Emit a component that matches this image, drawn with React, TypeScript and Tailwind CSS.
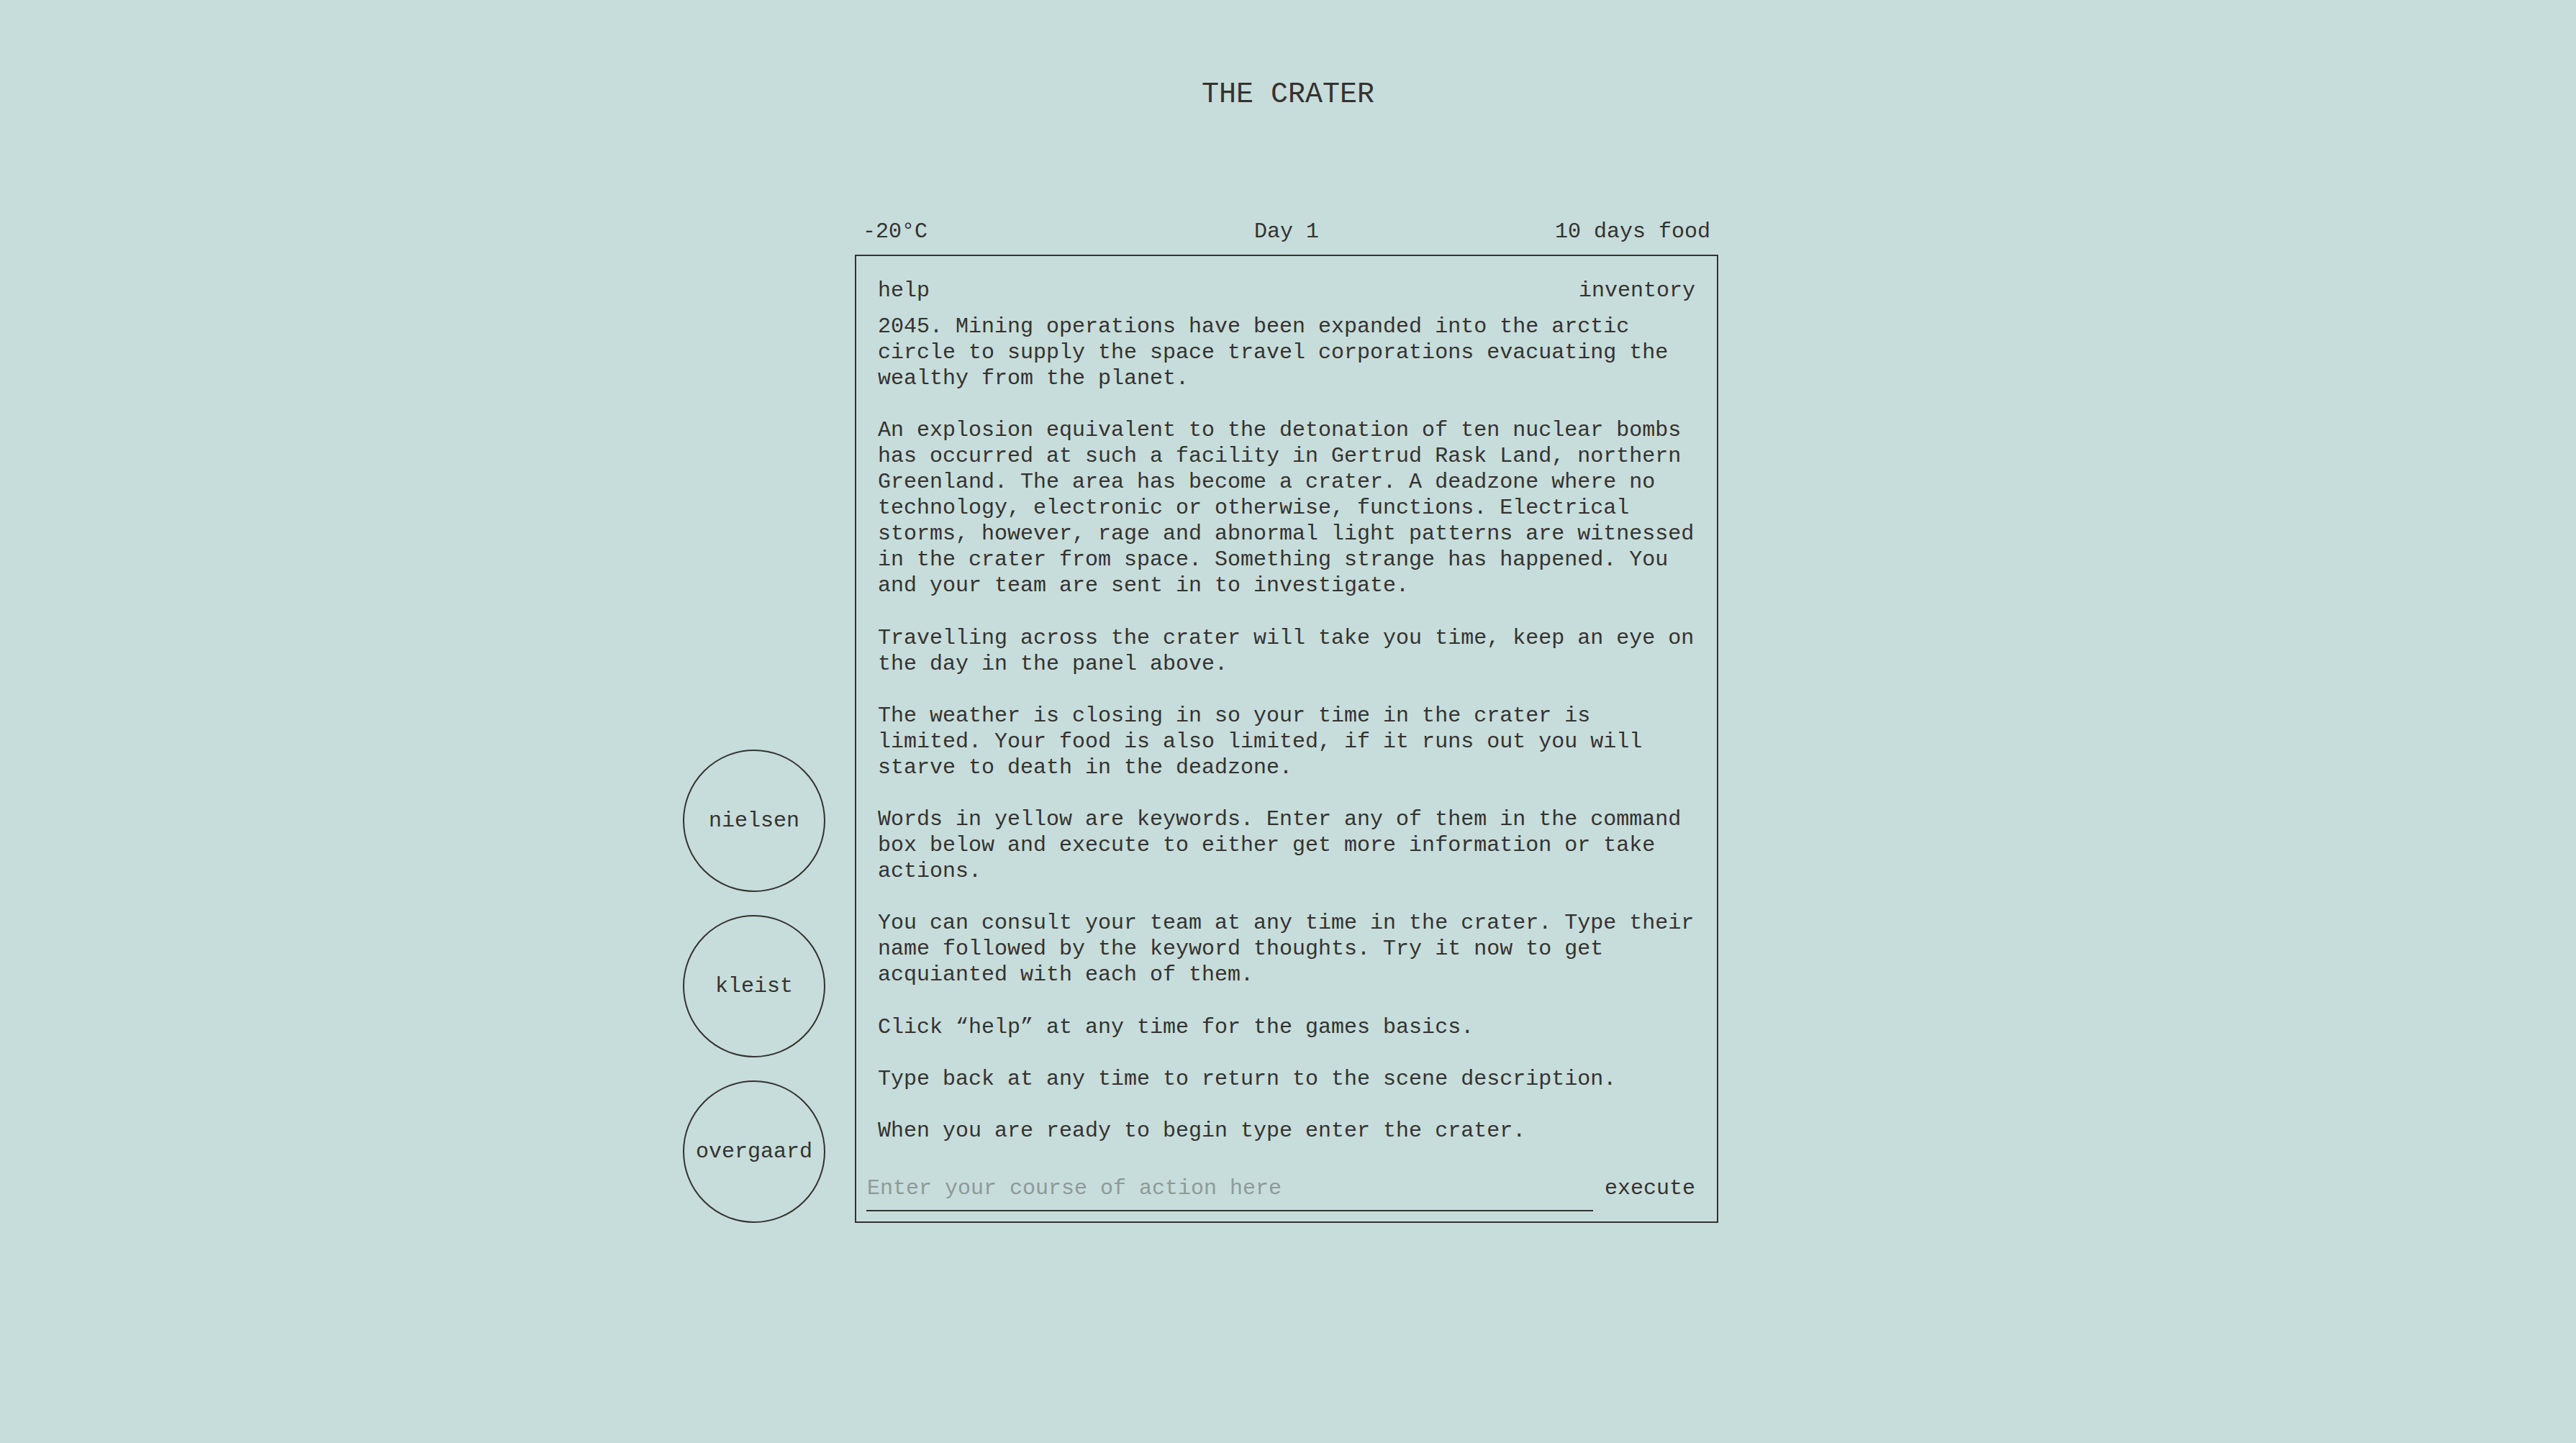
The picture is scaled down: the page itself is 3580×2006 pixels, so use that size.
const paragraphs = [
  "2045. Mining operations have been expanded into the arctic circle to supply the space travel corporations evacuating the wealthy from the planet.",
  "An explosion equivalent to the detonation of ten nuclear bombs has occurred at such a facility in Gertrud Rask Land, northern Greenland. The area has become a crater. A deadzone where no technology, electronic or otherwise, functions. Electrical storms, however, rage and abnormal light patterns are witnessed in the crater from space. Something strange has happened. You and your team are sent in to investigate.",
  "Travelling across the crater will take you time, keep an eye on the day in the panel above.",
  "The weather is closing in so your time in the crater is limited. Your food is also limited, if it runs out you will starve to death in the deadzone.",
  "Words in yellow are keywords. Enter any of them in the command box below and execute to either get more information or take actions.",
  "You can consult your team at any time in the crater. Type their name followed by the keyword thoughts. Try it now to get acquianted with each of them.",
  "Click \u201chelp\u201d at any time for the games basics.",
  "Type back at any time to return to the scene description.",
  "When you are ready to begin type enter the crater.",
];

const team = ["nielsen", "kleist", "overgaard"];

function TeamMember({ name }: { name: string }) {
  return (
    <div className="w-[198px] h-[198px] rounded-full border-2 border-[#36322f] flex items-center justify-center">
      <span className="text-[30px] leading-[36px]">{name}</span>
    </div>
  );
}

export default function App() {
  return (
    <div
      className="min-h-screen w-full bg-[#c6dddb] text-[#36322f] pt-[108px]"
      style={{ fontFamily: '"Liberation Mono", "Courier New", monospace' }}
    >
      <h1 className="text-center text-[40px] leading-[48px]">THE CRATER</h1>

      <div className="grid grid-cols-[1fr_1200px_1fr] mt-[148px] pr-[4px]">
        <div className="flex flex-col items-end justify-end gap-[32px] pr-[41px]">
          {team.map((name) => (
            <TeamMember key={name} name={name} />
          ))}
        </div>

        <div className="flex flex-col text-[30px] leading-[36px]">
          <div className="grid grid-cols-3 px-[11px] mb-[14px]">
            <span>-20°C</span>
            <span className="text-center">Day 1</span>
            <span className="text-right">10 days food</span>
          </div>

          <div className="border-2 border-[#36322f] px-[14px] pt-[30px] pb-[14px]">
            <div className="flex justify-between px-[16px] mb-[14px]">
              <button className="cursor-pointer">help</button>
              <button className="cursor-pointer">inventory</button>
            </div>

            <div className="px-[16px] space-y-[36.3px]">
              {paragraphs.map((text, i) => (
                <p key={i}>{text}</p>
              ))}
            </div>

            <div className="flex items-end mt-[44px]">
              <input
                type="text"
                placeholder="Enter your course of action here"
                className="flex-1 bg-transparent border-b-2 border-[#36322f] pl-[1px] pb-[12px] outline-none placeholder:text-[#8f9a98]"
              />
              <button className="pl-[16px] pr-[16px] pb-[14px] cursor-pointer">execute</button>
            </div>
          </div>
        </div>

        <div />
      </div>
    </div>
  );
}
